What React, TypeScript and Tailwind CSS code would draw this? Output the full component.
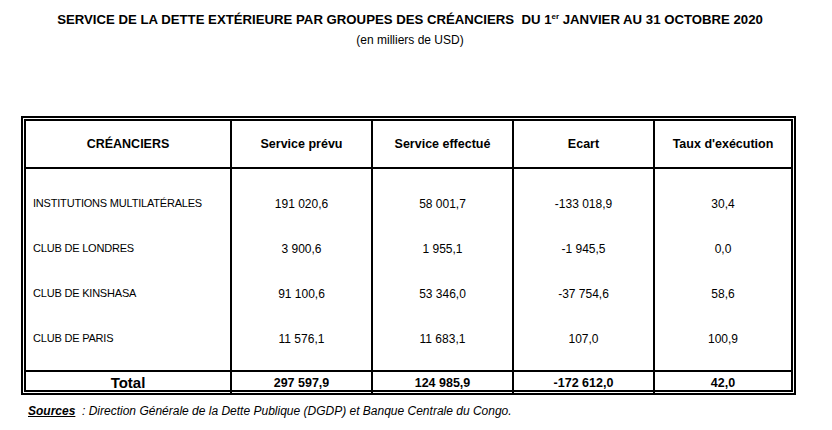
const rows = [
  { name: "INSTITUTIONS MULTILATÉRALES", prevu: "191 020,6", effectue: "58 001,7", ecart: "-133 018,9", taux: "30,4" },
  { name: "CLUB DE LONDRES", prevu: "3 900,6", effectue: "1 955,1", ecart: "-1 945,5", taux: "0,0" },
  { name: "CLUB DE KINSHASA", prevu: "91 100,6", effectue: "53 346,0", ecart: "-37 754,6", taux: "58,6" },
  { name: "CLUB DE PARIS", prevu: "11 576,1", effectue: "11 683,1", ecart: "107,0", taux: "100,9" },
];

const font = { fontFamily: '"Liberation Sans", Arial, sans-serif' };

export default function App() {
  return (
    <div className="w-[832px] h-[430px] bg-white text-black" style={font}>
      <div className="pt-[11px] pr-[12px] text-center">
        <h1 className="text-[13.2px] font-bold leading-[18px]">
          SERVICE DE LA DETTE EXTÉRIEURE PAR GROUPES DES CRÉANCIERS&nbsp; DU 1
          <sup className="text-[8px] relative -top-[5px]">er</sup> JANVIER AU 31 OCTOBRE 2020
        </h1>
        <p className="text-[12px] leading-[16px] mt-[3px]">(en milliers de USD)</p>
      </div>

      <div className="ml-[21px] mt-[68px] w-[775px] border-[5px] border-double border-black">
        <div className="grid grid-cols-[206px_141px_141px_141px_1fr] border-b-2 border-black h-[48px] text-[12.5px] font-bold">
          <div className="border-r-2 border-black flex items-center justify-center">CRÉANCIERS</div>
          <div className="border-r-2 border-black flex items-center justify-center">Service prévu</div>
          <div className="border-r-2 border-black flex items-center justify-center">Service effectué</div>
          <div className="border-r-2 border-black flex items-center justify-center">Ecart</div>
          <div className="flex items-center justify-center">Taux d'exécution</div>
        </div>

        <div className="grid grid-cols-[206px_141px_141px_141px_1fr] text-[12px]">
          {rows.map((r, i) => {
            const pad = i === 0 ? "pt-[12px]" : i === rows.length - 1 ? "pb-[9px]" : "";
            return (
              <div key={r.name} className="contents">
                <div className={`border-r-2 border-black ${pad}`}>
                  <div className="h-[45px] flex items-center pl-[7px] text-[11px] tracking-[-0.2px]">{r.name}</div>
                </div>
                <div className={`border-r-2 border-black ${pad}`}>
                  <div className="h-[45px] flex items-center justify-center">{r.prevu}</div>
                </div>
                <div className={`border-r-2 border-black ${pad}`}>
                  <div className="h-[45px] flex items-center justify-center">{r.effectue}</div>
                </div>
                <div className={`border-r-2 border-black ${pad}`}>
                  <div className="h-[45px] flex items-center justify-center">{r.ecart}</div>
                </div>
                <div className={pad}>
                  <div className="h-[45px] flex items-center justify-center">{r.taux}</div>
                </div>
              </div>
            );
          })}
        </div>

        <div className="grid grid-cols-[206px_141px_141px_141px_1fr] border-t-2 border-black h-[20px] font-bold text-[12.5px]">
          <div className="border-r-2 border-black flex items-center justify-center text-[15px]">Total</div>
          <div className="border-r-2 border-black flex items-center justify-center">297 597,9</div>
          <div className="border-r-2 border-black flex items-center justify-center">124 985,9</div>
          <div className="border-r-2 border-black flex items-center justify-center">-172 612,0</div>
          <div className="flex items-center justify-center">42,0</div>
        </div>
      </div>

      <p className="ml-[28px] mt-[8px] text-[12px] italic leading-[16px]">
        <span className="font-bold underline">Sources</span>
        <span>&nbsp;&nbsp;: Direction Générale de la Dette Publique (DGDP) et Banque Centrale du Congo.</span>
      </p>
    </div>
  );
}
